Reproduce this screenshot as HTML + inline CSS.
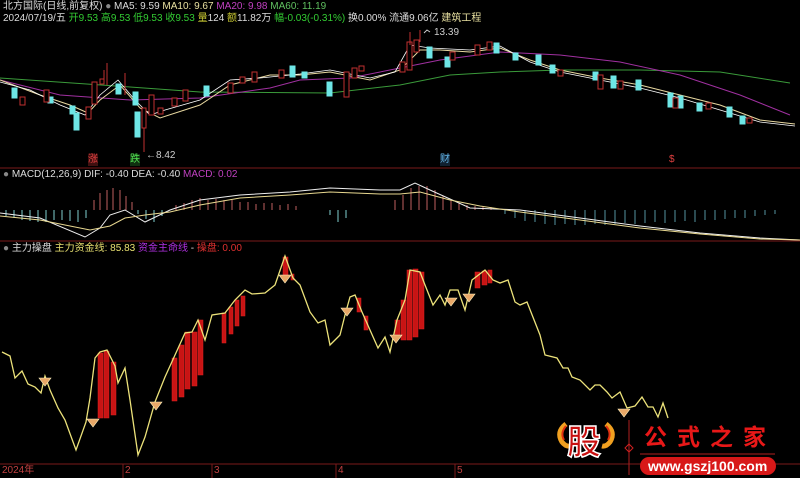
<!DOCTYPE html>
<html><head><meta charset="utf-8"><style>
body{margin:0;background:#000;width:800px;height:478px;overflow:hidden;font-family:"Liberation Sans","Noto Sans CJK SC",sans-serif;}
.t{position:absolute;font-size:10px;white-space:nowrap;color:#ddd;line-height:12px}
</style></head><body>
<svg width="800" height="478" style="position:absolute;left:0;top:0">
<g stroke="#7a1a1a" stroke-width="1"><line x1="0" y1="168" x2="800" y2="168"/><line x1="0" y1="241" x2="800" y2="241"/><line x1="0" y1="464" x2="800" y2="464"/>
<line x1="123" y1="464" x2="123" y2="478"/><line x1="212" y1="464" x2="212" y2="478"/><line x1="336" y1="464" x2="336" y2="478"/><line x1="455" y1="464" x2="455" y2="478"/></g>
<polyline fill="none" stroke="#3a9a3a" points="0,78 130,87 200,92 330,93 400,85 450,75 500,72 560,70 640,70 720,72 790,83"/>
<polyline fill="none" stroke="#a030a0" points="0,80 60,95 130,100 200,98 270,88 300,80 350,78 400,68 440,60 500,52 560,55 620,62 680,75 740,95 790,115"/>
<polyline fill="none" stroke="#e8d8a0" points="0,80 40,95 70,105 88,113 100,100 120,85 140,108 160,118 200,105 230,85 270,75 300,75 330,72 370,80 400,70 420,50 440,50 470,52 500,48 530,60 560,70 600,78 640,85 680,95 720,105 760,120 795,124"/>
<polyline fill="none" stroke="#fff" stroke-width=".8" points="0,82 30,90 60,105 85,115 100,95 118,80 135,100 150,115 165,110 200,100 230,80 260,78 300,74 330,70 370,78 395,72 410,45 430,48 470,50 500,46 530,62 560,72 600,80 640,88 680,98 720,110 760,122 795,126"/>
<g stroke-width="1">
<g fill="#6ee6e6" stroke="#6ee6e6"><rect x="12" y="88" width="5" height="10"/><rect x="48" y="97" width="5" height="6"/><rect x="70" y="106" width="5" height="8"/><rect x="74" y="113" width="5" height="17"/><rect x="116" y="84" width="5" height="10"/><rect x="133" y="92" width="5" height="13"/><rect x="135" y="112" width="5" height="25"/><rect x="204" y="86" width="5" height="10"/><rect x="290" y="66" width="5" height="11"/><rect x="302" y="72" width="5" height="6"/><rect x="327" y="82" width="5" height="14"/><rect x="427" y="47" width="5" height="11"/><rect x="445" y="57" width="5" height="10"/><rect x="494" y="43" width="5" height="10"/><rect x="513" y="53" width="5" height="7"/><rect x="536" y="55" width="5" height="10"/><rect x="550" y="65" width="5" height="8"/><rect x="593" y="72" width="5" height="8"/><rect x="611" y="76" width="5" height="12"/><rect x="636" y="80" width="5" height="10"/><rect x="668" y="93" width="5" height="14"/><rect x="678" y="96" width="5" height="12"/><rect x="697" y="103" width="5" height="8"/><rect x="727" y="107" width="5" height="10"/><rect x="740" y="116" width="5" height="8"/></g>
<g fill="#000" stroke="#c03030"><rect x="20" y="97" width="5" height="8"/><rect x="44" y="90" width="5" height="12"/><rect x="86" y="107" width="5" height="12"/><rect x="92" y="82" width="5" height="22"/><rect x="100" y="79" width="4" height="5"/><rect x="142" y="108" width="4" height="20"/><rect x="149" y="95" width="5" height="20"/><rect x="158" y="108" width="5" height="6"/><rect x="172" y="98" width="5" height="8"/><rect x="183" y="90" width="5" height="11"/><rect x="228" y="83" width="5" height="10"/><rect x="240" y="77" width="5" height="6"/><rect x="252" y="72" width="5" height="10"/><rect x="279" y="70" width="5" height="8"/><rect x="344" y="72" width="5" height="25"/><rect x="352" y="68" width="5" height="10"/><rect x="359" y="66" width="5" height="5"/><rect x="400" y="62" width="5" height="10"/><rect x="407" y="42" width="5" height="28"/><rect x="414" y="40" width="5" height="12"/><rect x="450" y="52" width="5" height="8"/><rect x="475" y="45" width="5" height="10"/><rect x="487" y="42" width="5" height="8"/><rect x="558" y="70" width="5" height="6"/><rect x="598" y="75" width="5" height="14"/><rect x="618" y="81" width="5" height="8"/><rect x="673" y="98" width="5" height="10"/><rect x="706" y="103" width="5" height="6"/><rect x="747" y="118" width="5" height="5"/></g>
<g stroke="#c03030"><line x1="104" y1="70" x2="104" y2="80"/><line x1="107" y1="63" x2="107" y2="85"/><line x1="125" y1="73" x2="125" y2="95"/><line x1="144" y1="128" x2="144" y2="152"/><line x1="410" y1="32" x2="410" y2="45"/><line x1="420" y1="30" x2="420" y2="42"/></g>
</g>
<polyline fill="none" stroke="#ccc" points="424,33 427,30 430,32"/>
<g stroke="#7fd0d0"><line x1="6" y1="210" x2="6" y2="216"/><line x1="14" y1="210" x2="14" y2="218"/><line x1="22" y1="210" x2="22" y2="220"/><line x1="30" y1="210" x2="30" y2="221"/><line x1="38" y1="210" x2="38" y2="222"/><line x1="46" y1="210" x2="46" y2="222"/><line x1="54" y1="210" x2="54" y2="220"/><line x1="62" y1="210" x2="62" y2="220"/><line x1="70" y1="210" x2="70" y2="221"/><line x1="78" y1="210" x2="78" y2="222"/><line x1="86" y1="210" x2="86" y2="218"/><line x1="138" y1="210" x2="138" y2="214"/><line x1="146" y1="210" x2="146" y2="219"/><line x1="154" y1="210" x2="154" y2="222"/><line x1="162" y1="210" x2="162" y2="216"/>
<line x1="330" y1="210" x2="330" y2="215"/><line x1="338" y1="210" x2="338" y2="222"/><line x1="346" y1="210" x2="346" y2="218"/></g>
<g stroke="#6ab8c8" stroke-width=".8">
<line x1="505" y1="210" x2="505" y2="214"/><line x1="515" y1="210" x2="515" y2="218"/><line x1="525" y1="210" x2="525" y2="221"/><line x1="535" y1="210" x2="535" y2="222"/><line x1="545" y1="210" x2="545" y2="224"/><line x1="555" y1="210" x2="555" y2="225"/><line x1="565" y1="210" x2="565" y2="224"/><line x1="575" y1="210" x2="575" y2="225"/><line x1="585" y1="210" x2="585" y2="225"/><line x1="595" y1="210" x2="595" y2="224"/><line x1="605" y1="210" x2="605" y2="225"/><line x1="615" y1="210" x2="615" y2="224"/><line x1="625" y1="210" x2="625" y2="223"/><line x1="635" y1="210" x2="635" y2="224"/><line x1="645" y1="210" x2="645" y2="223"/><line x1="655" y1="210" x2="655" y2="222"/><line x1="665" y1="210" x2="665" y2="223"/><line x1="675" y1="210" x2="675" y2="222"/><line x1="685" y1="210" x2="685" y2="221"/><line x1="695" y1="210" x2="695" y2="222"/><line x1="705" y1="210" x2="705" y2="220"/><line x1="715" y1="210" x2="715" y2="220"/><line x1="725" y1="210" x2="725" y2="219"/><line x1="735" y1="210" x2="735" y2="218"/><line x1="745" y1="210" x2="745" y2="218"/><line x1="755" y1="210" x2="755" y2="216"/><line x1="765" y1="210" x2="765" y2="215"/><line x1="775" y1="210" x2="775" y2="214"/></g>
<g stroke="#c06060"><line x1="94" y1="210" x2="94" y2="200"/><line x1="100" y1="210" x2="100" y2="193"/><line x1="107" y1="210" x2="107" y2="190"/><line x1="113" y1="210" x2="113" y2="188"/><line x1="120" y1="210" x2="120" y2="190"/><line x1="126" y1="210" x2="126" y2="196"/><line x1="132" y1="210" x2="132" y2="202"/>
<line x1="176" y1="210" x2="176" y2="205"/><line x1="184" y1="210" x2="184" y2="203"/><line x1="192" y1="210" x2="192" y2="200"/><line x1="200" y1="210" x2="200" y2="198"/><line x1="208" y1="210" x2="208" y2="200"/><line x1="216" y1="210" x2="216" y2="199"/><line x1="224" y1="210" x2="224" y2="200"/><line x1="232" y1="210" x2="232" y2="200"/><line x1="240" y1="210" x2="240" y2="202"/><line x1="248" y1="210" x2="248" y2="202"/><line x1="256" y1="210" x2="256" y2="204"/><line x1="264" y1="210" x2="264" y2="203"/><line x1="272" y1="210" x2="272" y2="203"/><line x1="280" y1="210" x2="280" y2="205"/><line x1="288" y1="210" x2="288" y2="204"/><line x1="296" y1="210" x2="296" y2="206"/>
<line x1="395" y1="210" x2="395" y2="200"/><line x1="403" y1="210" x2="403" y2="195"/><line x1="411" y1="210" x2="411" y2="188"/><line x1="419" y1="210" x2="419" y2="186"/><line x1="427" y1="210" x2="427" y2="186"/><line x1="435" y1="210" x2="435" y2="190"/><line x1="443" y1="210" x2="443" y2="196"/><line x1="451" y1="210" x2="451" y2="200"/><line x1="459" y1="210" x2="459" y2="203"/><line x1="467" y1="210" x2="467" y2="205"/><line x1="475" y1="210" x2="475" y2="206"/><line x1="483" y1="210" x2="483" y2="206"/><line x1="491" y1="210" x2="491" y2="207"/></g>
<polyline fill="none" stroke="#eee" points="0,213 40,218 85,237 100,228 110,215 125,210 145,222 170,210 200,200 240,195 290,192 330,188 380,190 400,190 415,183 430,190 470,208 520,210 580,218 640,226 700,233 760,238 800,240"/>
<polyline fill="none" stroke="#e8d890" points="0,216 40,220 90,230 110,226 125,218 145,215 170,212 200,205 240,198 290,195 330,192 380,194 400,194 420,192 450,200 480,206 520,212 580,220 640,228 700,234 760,239 800,240"/>
<g fill="#c81414" stroke="#e02020" stroke-width=".5">
<rect x="98" y="353" width="5" height="65"/><rect x="104" y="351" width="5" height="67"/><rect x="111" y="362" width="5" height="53"/>
<rect x="172" y="358" width="5" height="43"/><rect x="179" y="345" width="5" height="52"/><rect x="185" y="332" width="5" height="57"/><rect x="192" y="332" width="5" height="54"/><rect x="198" y="320" width="5" height="55"/>
<rect x="222" y="313" width="4" height="30"/><rect x="229" y="307" width="4" height="27"/><rect x="235" y="300" width="4" height="26"/><rect x="241" y="296" width="4" height="20"/>
<rect x="283" y="257" width="5" height="20"/><rect x="291" y="274" width="3" height="6"/>
<rect x="357" y="298" width="4" height="14"/><rect x="364" y="316" width="4" height="14"/>
<rect x="395" y="320" width="5" height="18"/><rect x="401" y="300" width="5" height="40"/><rect x="407" y="270" width="5" height="70"/><rect x="413" y="269" width="5" height="68"/><rect x="419" y="272" width="5" height="57"/>
<rect x="475" y="272" width="5" height="16"/><rect x="482" y="271" width="5" height="14"/><rect x="488" y="270" width="4" height="13"/></g>
<polyline fill="none" stroke="#ece27a" stroke-width="1.3" points="2,352 10,356 15,378 22,371 28,384 35,387 41,393 45,376 50,390 58,408 65,420 76,450 86,422 90,398 95,358 100,352 107,350 115,366 118,383 125,368 130,400 138,455 145,437 155,402 165,377 175,355 185,333 192,332 198,320 205,340 212,315 225,313 235,300 245,290 252,294 265,293 275,285 285,256 293,278 300,285 310,312 318,323 325,320 330,345 340,335 345,315 350,297 355,295 362,312 370,330 378,348 385,337 390,352 397,320 405,300 410,270 420,272 425,285 433,305 440,295 445,305 450,290 458,290 465,310 472,280 485,270 493,280 500,283 508,280 515,302 520,305 527,302 540,335 545,355 557,358 563,368 568,368 572,377 580,380 590,390 595,385 600,385 607,392 612,398 620,392 627,408 635,406 642,397 648,407 653,407 658,417 663,403 668,418"/>
<g fill="#e8a868" stroke="#fff2c0" stroke-width=".6">
<path d="M39,378h12l-6,8z"/><path d="M87,419h12l-6,8z"/><path d="M150,402h12l-6,8z"/><path d="M279,275h12l-6,8z"/><path d="M341,308h12l-6,8z"/><path d="M390,335h12l-6,8z"/><path d="M445,298h12l-6,8z"/><path d="M463,294h12l-6,8z"/><path d="M618,409h12l-6,8z"/></g>
<path d="M566,424 q-10,8 -4,18 q4,5 8,4 M606,424 q10,8 4,18 q-4,5 -8,4" stroke="#f0a020" stroke-width="5" fill="none"/>
<path d="M566,426 q-6,7 -2,14 M606,426 q6,7 2,14" stroke="#e03010" stroke-width="2" fill="none"/>
<line x1="629" y1="420" x2="629" y2="475" stroke="#b02020"/>
<path d="M629,444 l4,4 -4,4 -4,-4z" fill="none" stroke="#d02020"/>
<line x1="640" y1="454" x2="775" y2="454" stroke="#b02020"/>
<rect x="640" y="457" width="136" height="18" rx="9" fill="#d81818"/>
</svg>
<div class="t" style="left:3px;top:1px">北方国际(日线,前复权) <span style="color:#888">●</span> MA5: 9.59 <span style="color:#e8e0a0">MA10: 9.67</span> <span style="color:#c040c0">MA20: 9.98</span> <span style="color:#60c060">MA60: 11.19</span></div>
<div class="t" style="left:3px;top:13px">2024/07/19/五 <span style="color:#3c3">开9.53 高9.53 低9.53 收9.53</span> <span style="color:#cc3">量</span>124 <span style="color:#cc3">额</span>11.82万 <span style="color:#3c3">幅-0.03(-0.31%)</span> 换0.00% 流通9.06亿 <span style="color:#e8e0a0">建筑工程</span></div>
<div class="t" style="left:434px;top:27px;color:#ccc">13.39</div>
<div class="t" style="left:146px;top:150px;color:#ccc">←8.42</div>
<div class="t" style="left:88px;top:154px;color:#e04040;background:#401010">涨</div>
<div class="t" style="left:130px;top:154px;color:#50e050;background:#103010">跌</div>
<div class="t" style="left:440px;top:154px;color:#60b0e0;background:#102030">财</div>
<div class="t" style="left:669px;top:154px;color:#e04040">$</div>
<div class="t" style="left:3px;top:169px"><span style="color:#888">●</span> MACD(12,26,9) DIF: -0.40 DEA: -0.40 <span style="color:#c040c0">MACD: 0.02</span></div>
<div class="t" style="left:3px;top:243px"><span style="color:#888">●</span> 主力操盘 <span style="color:#e8e070">主力资金线: 85.83</span> <span style="color:#b030e0">资金主命线</span> - <span style="color:#e03030">操盘: 0.00</span></div>
<div class="t" style="left:2px;top:465px;color:#c04040">2024年</div>
<div class="t" style="left:125px;top:465px;color:#c04040">2</div>
<div class="t" style="left:214px;top:465px;color:#c04040">3</div>
<div class="t" style="left:338px;top:465px;color:#c04040">4</div>
<div class="t" style="left:457px;top:465px;color:#c04040">5</div>
<div class="t" style="left:567px;top:423px;font-size:34px;line-height:40px;font-weight:bold;color:#c81010;-webkit-text-stroke:1.5px #fff">股</div>
<div class="t" style="left:644px;top:423px;font-size:23px;line-height:28px;font-weight:bold;color:#e81818;letter-spacing:10px">公式之家</div>
<div class="t" style="left:648px;top:459px;font-size:14px;line-height:15px;font-weight:bold;color:#fff">www.gszj100.com</div>
</body></html>
